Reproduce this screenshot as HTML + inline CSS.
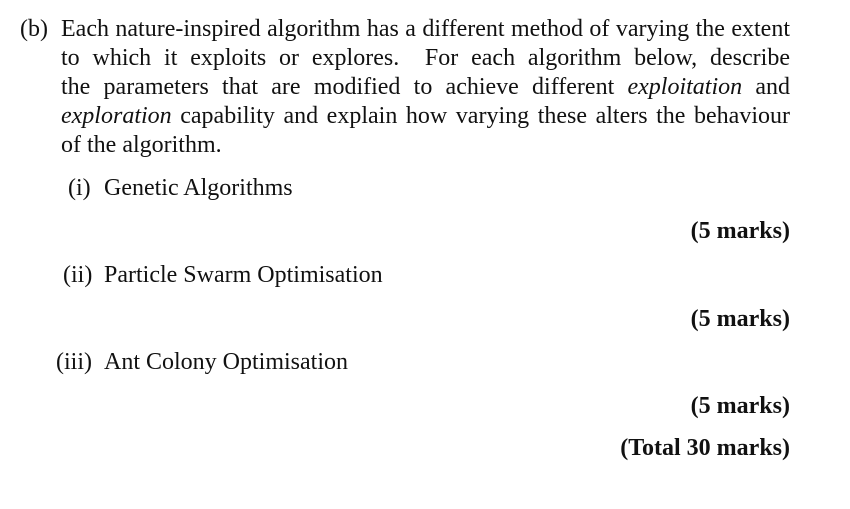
<!DOCTYPE html>
<html><head><meta charset="utf-8"><style>
body{margin:0;width:850px;height:509px;background:#fff;overflow:hidden;position:relative;font-family:"Liberation Serif",serif;font-size:24px;color:#111;}
.l{position:absolute;line-height:29px;white-space:nowrap;}
.j{position:absolute;left:61px;width:729px;line-height:29px;text-align:justify;text-align-last:justify;white-space:nowrap;}
.r{position:absolute;right:60px;font-weight:bold;line-height:29px;}
i{font-style:italic}
</style></head><body>
<div class="l" style="left:20px;top:15px">(b)</div>
<div class="j" style="top:15px">Each nature-inspired algorithm has a different method of varying the extent</div>
<div class="j" style="top:44px">to which it exploits or explores. &nbsp;For each algorithm below, describe</div>
<div class="j" style="top:73px">the parameters that are modified to achieve different <i>exploitation</i> and</div>
<div class="j" style="top:102px"><i>exploration</i> capability and explain how varying these alters the behaviour</div>
<div class="l" style="left:61px;top:131px">of the algorithm.</div>
<div class="l" style="left:68px;top:174px">(i)</div><div class="l" style="left:104px;top:174px">Genetic Algorithms</div>
<div class="r" style="top:217px">(5 marks)</div>
<div class="l" style="left:63px;top:261px">(ii)</div><div class="l" style="left:104px;top:261px">Particle Swarm Optimisation</div>
<div class="r" style="top:305px">(5 marks)</div>
<div class="l" style="left:56px;top:348px">(iii)</div><div class="l" style="left:104px;top:348px">Ant Colony Optimisation</div>
<div class="r" style="top:392px">(5 marks)</div>
<div class="r" style="top:434px">(Total 30 marks)</div>
</body></html>
